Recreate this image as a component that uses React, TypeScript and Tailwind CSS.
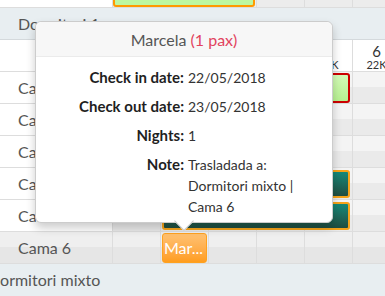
const cellBg = "bg-[linear-gradient(#f4f4f4_50%,#eaeaea_50%)]";

function Cells({ bg }: { bg: string }) {
  return (
    <>
      {[1, 2, 3, 4, 5, 6].map((d) => (
        <div key={d} className={`w-[48px] shrink-0 border-r border-[#dddddd] ${bg}`} />
      ))}
    </>
  );
}

function Row({
  label,
  highlight,
  children,
}: {
  label: string;
  highlight?: boolean;
  children?: React.ReactNode;
}) {
  return (
    <div className="relative flex h-[32px] border-b border-[#dddddd]">
      <div
        className={`flex w-[113px] shrink-0 items-center border-r border-[#dddddd] pl-[18px] text-[16px] ${
          highlight ? "bg-[linear-gradient(#efefef_50%,#e6e6e6_50%)]" : "bg-white"
        }`}
      >
        {label}
      </div>
      <Cells bg={highlight ? "bg-[linear-gradient(#efefef_50%,#e6e6e6_50%)]" : cellBg} />
      {children}
    </div>
  );
}

function TealBar({ left, width }: { left: number; width: number }) {
  return (
    <div
      className="absolute top-[2px] h-[28px] rounded-[3px] border-2 border-[#f5a31a] bg-gradient-to-b from-[#11897a] to-[#1f4d40]"
      style={{ left, width }}
    />
  );
}

export default function App() {
  const details = [
    ["Check in date:", "22/05/2018"],
    ["Check out date:", "23/05/2018"],
    ["Nights:", "1"],
  ];

  return (
    <div className="relative h-[296px] w-[385px] overflow-hidden bg-white font-['Lato',sans-serif] text-[#555555]">
      <div className="w-[460px]">
        {/* tail of previous row */}
        <div className="relative flex h-[8px] overflow-hidden border-b border-[#dddddd]">
          <div className="w-[113px] shrink-0 border-r border-[#dddddd] bg-white" />
          <Cells bg="bg-[#ececec]" />
          <div className="absolute left-[113px] top-[-24px] h-[31px] w-[142px] rounded-[3px] border-2 border-[#ff9900] bg-[#bdf7a0]" />
        </div>

        {/* room band */}
        <div className="flex h-[32px] items-center border-b border-[#d4d9dc] bg-[#e8eef1] pl-[18px] text-[16px]">
          Dormitori 1
        </div>

        {/* day header */}
        <div className="flex h-[32px] border-b border-[#dddddd] bg-white">
          <div className="w-[113px] shrink-0 border-r border-[#dddddd]" />
          {[1, 2, 3, 4, 5, 6].map((d) => (
            <div
              key={d}
              className="flex w-[48px] shrink-0 flex-col items-center border-r border-[#dddddd] pt-[3px] text-[#333]"
            >
              <span className="text-[15px] leading-[16px]">{d}</span>
              <span className="text-[11px] leading-[12px]">22K</span>
            </div>
          ))}
        </div>

        <Row label="Cama 1">
          <div className="absolute left-[162px] top-[1px] h-[30px] w-[188px] rounded-[3px] border-2 border-[#cc0000] bg-gradient-to-b from-[#d4fbb8] to-[#b6f190]" />
        </Row>
        <Row label="Cama 2" />
        <Row label="Cama 3" />
        <Row label="Cama 4">
          <TealBar left={162} width={188} />
        </Row>
        <Row label="Cama 5">
          <TealBar left={162} width={188} />
        </Row>
        <Row label="Cama 6" highlight>
          <div className="absolute left-[162px] top-[1px] flex h-[30px] w-[45px] items-center rounded-[3px] border border-[#ffa21f] bg-gradient-to-b from-[#ffc170] to-[#ff9d1c] pl-[1px] text-[16px] text-white">
            Mar...
          </div>
        </Row>

        {/* next room band */}
        <div className="flex h-[32px] items-center bg-[#e8eef1] text-[16px]">
          <span className="-ml-[12px]">Dormitori mixto</span>
        </div>
      </div>

      {/* popover */}
      <div className="absolute left-[35px] top-[21px] w-[298px] rounded-[6px] border border-[#cccccc] bg-white shadow-[0_5px_10px_rgba(0,0,0,0.2)]">
        <div className="flex h-[35px] items-center justify-center rounded-t-[6px] border-b border-[#ebebeb] bg-[#f7f7f7] pt-[2px] text-[16px] text-[#555]">
          Marcela&nbsp;<span className="text-[#e2435e]">(1 pax)</span>
        </div>
        <div className="grid grid-cols-[148px_1fr] gap-x-[4px] gap-y-[8px] pb-[5px] pr-[14px] pt-[10px] text-[14px] leading-[21px]">
          {details.map(([k, v]) => (
            <div key={k} className="contents">
              <div className="text-right text-[15px] font-bold text-[#1f1f1f]">{k}</div>
              <div className="text-[#333]">{v}</div>
            </div>
          ))}
          <div className="text-right text-[15px] font-bold text-[#1f1f1f]">Note:</div>
          <div className="text-[#333]">Trasladada a: Dormitori mixto | Cama 6</div>
        </div>
        <div className="absolute -bottom-[6px] left-[141px] h-[14px] w-[14px] rotate-45 border-b border-r border-[#cccccc] bg-white" />
      </div>
    </div>
  );
}
